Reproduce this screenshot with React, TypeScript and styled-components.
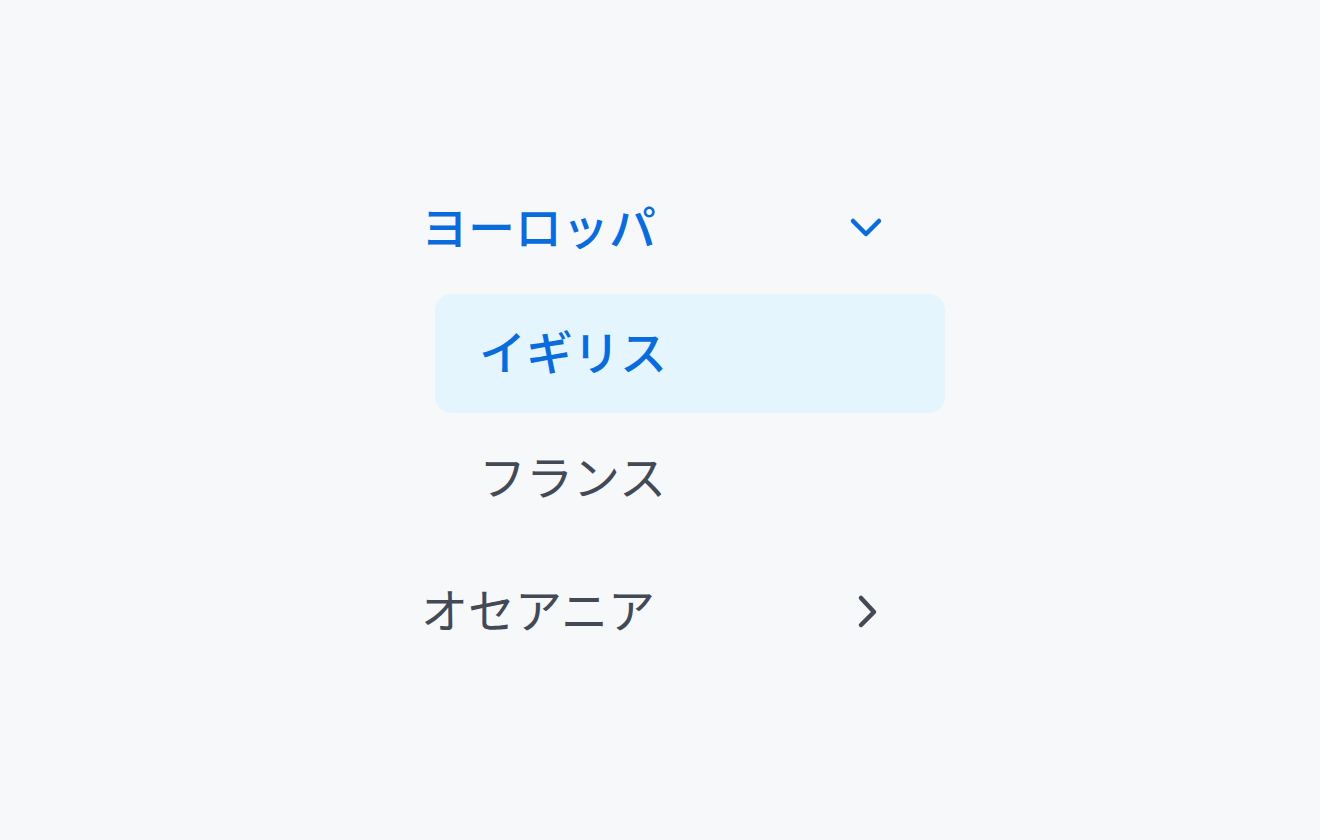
import * as React from 'react';
import styled, { createGlobalStyle } from 'styled-components';

const GlobalStyle = createGlobalStyle`
  html, body {
    margin: 0;
    padding: 0;
    background: #f7f8fa;
  }
  body {
    font-family: "Noto Sans CJK JP", "Noto Sans", sans-serif;
  }
`;

const Page = styled.div`
  width: 1320px;
  height: 840px;
  display: flex;
  justify-content: flex-start;
  align-items: flex-start;
  padding: 168px 0 0 421px;
  box-sizing: border-box;
`;

const Nav = styled.nav`
  display: flex;
  flex-direction: column;
  width: 530px;
`;

const Group = styled.div`
  display: flex;
  flex-direction: column;
`;

const GroupHeader = styled.div<{ $open?: boolean }>`
  display: flex;
  align-items: center;
  justify-content: space-between;
  width: 462px;
  height: 120px;
  font-size: 47px;
  font-weight: ${p => (p.$open ? 500 : 400)};
  color: ${p => (p.$open ? '#0a6cdc' : '#434a55')};
`;

const Label = styled.span`
  padding-bottom: 8px;
`;

const SubList = styled.ul`
  list-style: none;
  margin: 6px 0 13px 14px;
  padding: 0;
  display: flex;
  flex-direction: column;
  gap: 6px;
`;

const SubItem = styled.li<{ $active?: boolean }>`
  display: flex;
  align-items: center;
  width: 510px;
  height: 119px;
  padding-left: 44px;
  box-sizing: border-box;
  border-radius: 16px;
  font-size: 47px;
  font-weight: ${p => (p.$active ? 500 : 400)};
  color: ${p => (p.$active ? '#0a6cdc' : '#434a55')};
  background: ${p => (p.$active ? '#e4f5fe' : 'transparent')};
`;

const Chevron = styled.svg`
  display: block;
  flex-shrink: 0;
`;

const ChevronDown = () => (
  <Chevron width="36" height="24" viewBox="0 0 36 24" fill="none">
    <path d="M6 5 L19 18 L32 5" stroke="#0a6cdc" strokeWidth="4.5" strokeLinecap="round" strokeLinejoin="round" />
  </Chevron>
);

const ChevronRight = () => (
  <Chevron width="36" height="36" viewBox="0 0 36 36" fill="none">
    <path d="M14 5 L27 19 L14 32" stroke="#434a55" strokeWidth="4.5" strokeLinecap="round" strokeLinejoin="round" />
  </Chevron>
);

export default function App() {
  return (
    <>
      <GlobalStyle />
      <Page>
        <Nav>
          <Group>
            <GroupHeader $open>
              <Label>ヨーロッパ</Label>
              <ChevronDown />
            </GroupHeader>
            <SubList>
              <SubItem $active><Label>イギリス</Label></SubItem>
              <SubItem><Label>フランス</Label></SubItem>
            </SubList>
          </Group>
          <Group>
            <GroupHeader>
              <Label>オセアニア</Label>
              <ChevronRight />
            </GroupHeader>
          </Group>
        </Nav>
      </Page>
    </>
  );
}
